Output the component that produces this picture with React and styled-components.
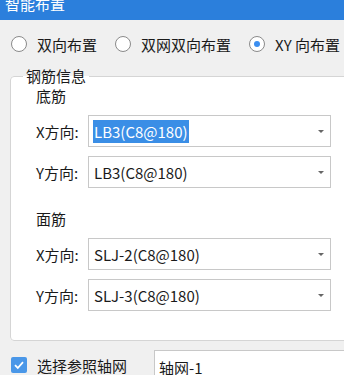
import React from "react";
import styled, { createGlobalStyle } from "styled-components";

const Global = createGlobalStyle`
  html, body {
    margin: 0;
    padding: 0;
    background: #f0f0f0;
    font-family: "Noto Sans CJK SC", "Noto Sans", sans-serif;
    color: #1a1a1a;
  }
`;

const Page = styled.div`
  width: 344px;
  height: 375px;
  overflow: hidden;
  background: #f0f0f0;
`;

const TitleBar = styled.div`
  height: 20px;
  background: #2b7fdc;
  overflow: hidden;
  color: #fff;
  font-size: 15px;
  line-height: 20px;
  padding-left: 5px;
`;

const TitleText = styled.div`
  margin-top: -6px;
`;

const RadioRow = styled.div`
  display: flex;
  align-items: center;
  height: 48px;
  padding-left: 11px;
  white-space: nowrap;
`;

const RadioItem = styled.label`
  display: flex;
  align-items: center;
  gap: 10px;
  margin-right: 18px;
  font-size: 15px;
`;

const RadioCircle = styled.span`
  width: 14px;
  height: 14px;
  border-radius: 50%;
  border: 1px solid #8a8a8a;
  background: #fff;
  display: flex;
  align-items: center;
  justify-content: center;
  &::after {
    content: "";
    width: 6px;
    height: 6px;
    border-radius: 50%;
    background: ${(p) => (p.checked ? "#3b8ef0" : "transparent")};
  }
`;

const Group = styled.fieldset`
  margin: 0 -20px 0 10px;
  padding: 2px 0 0 25px;
  height: 273px;
  box-sizing: border-box;
  border: 1px solid #d5d5d5;
  border-radius: 4px;
  background: #fff;
`;

const Legend = styled.legend`
  font-size: 15px;
  padding: 0 3px;
  margin-left: -13px;
  line-height: 16px;
`;

const SubTitle = styled.div`
  font-size: 15px;
  height: 20px;
  line-height: 20px;
  margin-bottom: 9px;
`;

const Row = styled.div`
  display: flex;
  align-items: center;
  height: 32px;
  margin-bottom: 9px;
`;

const Label = styled.div`
  width: 52px;
  font-size: 15px;
`;

const Select = styled.div`
  width: 243px;
  height: 32px;
  box-sizing: border-box;
  border: 1px solid #c8c8c8;
  background: #fff;
  display: flex;
  align-items: center;
  padding-left: 4px;
  padding-right: 6px;
  font-size: 15px;
`;

const Value = styled.span`
  flex: 1;
  span {
    background: ${(p) => (p.selected ? "#3a8ee6" : "transparent")};
    color: ${(p) => (p.selected ? "#fff" : "#1a1a1a")};
    padding: 1px 1px;
  }
`;

const Arrow = styled.span`
  width: 0;
  height: 0;
  border-left: 3.5px solid transparent;
  border-right: 3.5px solid transparent;
  border-top: 3.5px solid #666;
`;

const Spacer = styled.div`
  height: ${(p) => p.h}px;
`;

const Bottom = styled.div`
  display: flex;
  align-items: center;
  margin-top: 9px;
  padding-left: 11px;
`;

const Check = styled.span`
  width: 16px;
  height: 16px;
  border-radius: 2px;
  background: #4a97e8;
  display: flex;
  align-items: center;
  justify-content: center;
`;

const CheckLabel = styled.span`
  font-size: 15px;
  margin-left: 10px;
  width: 117px;
`;

const TextBox = styled.div`
  flex: 1;
  height: 30px;
  box-sizing: border-box;
  border: 1px solid #c8c8c8;
  border-right: none;
  background: #fff;
  font-size: 15px;
  padding: 6px 0 0 4px;
`;

const Field = ({ label, value, selected }) => (
  <Row>
    <Label>{label}</Label>
    <Select>
      <Value selected={selected}>
        <span>{value}</span>
      </Value>
      <Arrow />
    </Select>
  </Row>
);

export default function App() {
  return (
    <Page>
      <Global />
      <TitleBar>
        <TitleText>智能布置</TitleText>
      </TitleBar>
      <RadioRow>
        <RadioItem>
          <RadioCircle />
          双向布置
        </RadioItem>
        <RadioItem>
          <RadioCircle />
          双网双向布置
        </RadioItem>
        <RadioItem>
          <RadioCircle checked />
          XY 向布置
        </RadioItem>
      </RadioRow>
      <Group>
        <Legend>钢筋信息</Legend>
        <SubTitle>底筋</SubTitle>
        <Field label="X方向:" value="LB3(C8@180)" selected />
        <Field label="Y方向:" value="LB3(C8@180)" />
        <Spacer h={12} />
        <SubTitle>面筋</SubTitle>
        <Field label="X方向:" value="SLJ-2(C8@180)" />
        <Field label="Y方向:" value="SLJ-3(C8@180)" />
      </Group>
      <Bottom>
        <Check>
          <svg width="12" height="12" viewBox="0 0 12 12">
            <path d="M2 6.2 L4.8 9 L10 3.2" stroke="#fff" strokeWidth="1.8" fill="none" />
          </svg>
        </Check>
        <CheckLabel>选择参照轴网</CheckLabel>
        <TextBox>轴网-1</TextBox>
      </Bottom>
    </Page>
  );
}
